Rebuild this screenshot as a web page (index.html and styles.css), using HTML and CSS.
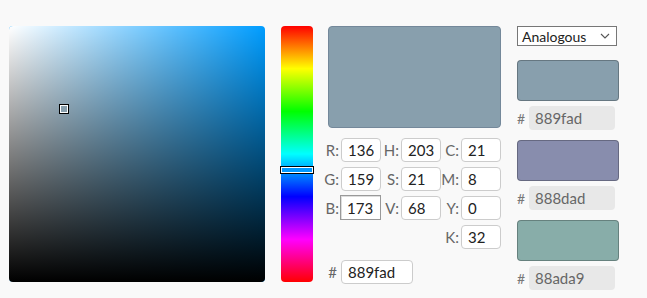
FILE: index.html
```html
<!DOCTYPE html>
<html lang="en">
  <head>
    <meta charset="UTF-8" />
    <title>Color picker</title>
    <link rel="stylesheet" href="styles.css">
  </head>
  <body>
    <div class="picker">
      <div class="sv-box">
        <div class="sv-white"></div>
        <div class="sv-black"></div>
        <div class="sv-marker"></div>
      </div>

      <div class="hue-bar">
        <div class="hue-marker"></div>
      </div>

      <div class="values">
        <div class="preview"></div>
        <div class="fields">
          <label>R:</label><input type="text" value="136">
          <label>H:</label><input type="text" value="203">
          <label>C:</label><input type="text" value="21">

          <label>G:</label><input type="text" value="159">
          <label>S:</label><input type="text" value="21">
          <label>M:</label><input type="text" value="8">

          <label>B:</label><input type="text" value="173" class="active">
          <label>V:</label><input type="text" value="68">
          <label>Y:</label><input type="text" value="0">

          <span></span><span></span><span></span><span></span>
          <label>K:</label><input type="text" value="32">
        </div>
        <div class="hex-row">
          <label>#</label><input type="text" value="889fad">
        </div>
      </div>

      <div class="scheme">
        <div class="select">
          <span>Analogous</span>
          <svg width="10" height="6" viewBox="0 0 10 6"><path d="M1 1 L5 5 L9 1" fill="none" stroke="#555" stroke-width="1.1"/></svg>
        </div>
        <div class="swatch" style="background-color: #889fad"></div>
        <div class="swatch-hex"><span>#</span><div class="hex-box">889fad</div></div>
        <div class="swatch" style="background-color: #888dad"></div>
        <div class="swatch-hex"><span>#</span><div class="hex-box">888dad</div></div>
        <div class="swatch" style="background-color: #88ada9"></div>
        <div class="swatch-hex"><span>#</span><div class="hex-box">88ada9</div></div>
      </div>
    </div>
  </body>
</html>
```

FILE: styles.css
```css
body,
html {
  margin: 0;
  padding: 0;
  background-color: #f9f9f9;
  font-family: Lato, "Open Sans", sans-serif;
}
.picker {
  display: flex;
  align-items: flex-start;
  padding: 26px 0 0 9px;
}
.sv-box {
  position: relative;
  width: 256px;
  height: 256px;
  border-radius: 4px;
  overflow: hidden;
  background-color: #009dff;
}
.sv-white,
.sv-black {
  position: absolute;
  inset: 0;
}
.sv-white {
  background: linear-gradient(to right, #fff, rgba(255, 255, 255, 0));
}
.sv-black {
  background: linear-gradient(to bottom, rgba(0, 0, 0, 0), #000);
}
.sv-marker {
  position: absolute;
  left: 50px;
  top: 78px;
  width: 6px;
  height: 6px;
  border: 1px solid #fff;
  outline: 1px solid #000;
  background-color: #889fad;
  margin: 1px;
}
.hue-bar {
  position: relative;
  width: 32px;
  height: 256px;
  margin-left: 16px;
  border-radius: 4px;
  background: linear-gradient(
    to bottom,
    #ff0000 0%,
    #ffff00 16.66%,
    #00ff00 33.33%,
    #00ffff 50%,
    #0000ff 66.66%,
    #ff00ff 83.33%,
    #ff0000 100%
  );
}
.hue-marker {
  position: absolute;
  left: -1px;
  top: 140px;
  width: 30px;
  height: 4px;
  border: 1px solid #fff;
  outline: 1px solid #000;
  margin: 1px;
  background-color: #0099ff;
}
.values {
  width: 173px;
  margin-left: 15px;
}
.preview {
  height: 100px;
  border: 1px solid #74889a;
  border-radius: 4px;
  background-color: #889fad;
}
.fields {
  display: grid;
  grid-template-columns: 13px 40px 20px 40px 20px 40px;
  row-gap: 5px;
  margin-top: 10px;
}
.fields label,
.hex-row label {
  display: flex;
  justify-content: flex-end;
  color: #666;
  font-size: 15px;
  line-height: 24px;
  padding-right: 2px;
  white-space: nowrap;
}
.fields input,
.hex-row input {
  box-sizing: border-box;
  width: 40px;
  height: 24px;
  border: 1px solid #ccc;
  border-radius: 4px;
  background-color: #fff;
  padding: 0 6px;
  font-family: Lato, "Open Sans", sans-serif;
  font-size: 15px;
  color: #222;
}
.fields input.active {
  border: 1px solid #999;
  border-radius: 0;
  box-shadow: inset 1px 1px 0 #ddd;
  margin: -1px 0 0 -1px;
  width: 41px;
  height: 25px;
}
.hex-row {
  display: flex;
  margin-top: 11px;
}
.hex-row label {
  width: 13px;
  box-sizing: border-box;
  padding-right: 4px;
}
.hex-row input {
  width: 72px;
}
.scheme {
  width: 102px;
  margin-left: 16px;
}
.select {
  box-sizing: border-box;
  width: 100px;
  height: 20px;
  border: 1px solid #777;
  background-color: #fff;
  display: flex;
  align-items: center;
  justify-content: space-between;
  padding: 0 6px 0 4px;
  font-size: 14px;
  color: #222;
}
.swatch {
  box-sizing: border-box;
  height: 41px;
  border: 1px solid rgba(0, 0, 0, 0.25);
  border-radius: 4px;
  margin-top: 14px;
}
.swatch-hex + .swatch {
  margin-top: 10px;
}
.swatch-hex {
  display: flex;
  align-items: center;
  margin-top: 5px;
}
.swatch-hex span {
  width: 12px;
  color: #777;
  font-size: 14px;
}
.hex-box {
  width: 86px;
  height: 24px;
  line-height: 24px;
  box-sizing: border-box;
  padding-left: 6px;
  border-radius: 4px;
  background-color: #e8e8e8;
  color: #666;
  font-size: 15px;
}
```
